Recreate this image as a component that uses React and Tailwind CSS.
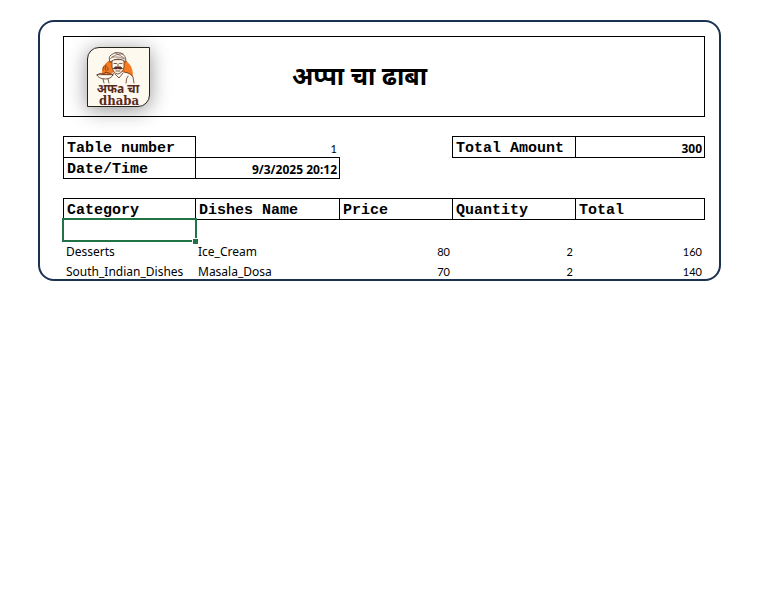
const dishes = [
  { category: "Desserts", name: "Ice_Cream", price: 80, quantity: 2, total: 160 },
  { category: "South_Indian_Dishes", name: "Masala_Dosa", price: 70, quantity: 2, total: 140 },
];

const mono = "font-['Liberation_Mono',monospace] text-[15px] leading-4 font-bold text-left p-0 pt-1 pl-[3px]";
const calc = "font-['Lato',sans-serif] p-0 pr-[3px] text-right";
const strong = "font-['Noto_Sans',sans-serif] p-0 pt-[3px] pr-0.5 text-right text-xs leading-4 font-bold";
const label = "font-['Noto_Sans',sans-serif] text-xs leading-5 p-0";

function Columns() {
  return (
    <colgroup>
      <col className="w-[133px]" />
      <col className="w-[144px]" />
      <col className="w-[113px]" />
      <col className="w-[123px]" />
      <col className="w-[129px]" />
    </colgroup>
  );
}

function Logo() {
  return (
    <div className="h-[60px] w-[63px] overflow-hidden rounded-[12px_0] border border-[#26221c] bg-[#fdf9ee] shadow-[0_3px_20px_rgba(0,0,0,0.42)]">
      <svg viewBox="0 0 61 58" className="block h-full w-full" role="img" aria-label="अफa चा dhaba">
        <path d="M14.500 31Q13 28 14 23A15.5 15.5 0 0 1 44.500 23Q45.500 27 44 30Z" fill="#f47b20" />
        <g stroke="#5b3326" strokeWidth="0.8" strokeLinecap="round" strokeLinejoin="round">
          <path d="M19 35L20 28L26 24H35Q43 25 45 30L46 35Z" fill="#fdf9ee" stroke="none" />
          <path d="M24 12V19Q25 25 29.5 26Q35 25 36 19V12Z" fill="#fdf3e6" />
          <path d="M22 14Q20 9 23 7Q27 3 33 5Q38 7 38 14Q30 8 22 14Z" fill="#fdf9ee" />
          <path d="M22 11Q28 5 35 6M24 9Q31 8 37 11M27 5Q32 7 36 10" fill="none" strokeWidth="0.6" />
          <path d="M26 15.500H28.500M31.500 15.500H34M30 16V18M28 23H32" fill="none" />
          <path d="M25.500 20.500Q27 18 30 19Q33 18 34.500 20.500Q32 21.500 30 20.500Q28 21.500 25.500 20.500Z" fill="#4d2519" />
          <path d="M36 24Q43 25 45 29L46 35M26 25L21 30M38 35Q38 30 40 28M27 26L31 30L35 25" fill="none" />
          <path d="M9 27Q11 31 17 31Q23 31 25 27Z" fill="#fdf9ee" />
          <path d="M9 27Q12 24 15 26Q18 23 21 25L25 27M15 31L16 35M20 31L21 35M15 22Q14 20 16 18M18 23Q16 20 18 17M20 22Q21 20 19 19" fill="none" />
        </g>
        <text x="30" y="45" textAnchor="middle" fill="#5b291b" className="font-['Noto_Sans',sans-serif] text-[12px] font-bold">अफa चा</text>
        <text x="31" y="57" textAnchor="middle" fill="#5b291b" className="font-['DejaVu_Serif_Condensed','DejaVu_Serif',serif] text-[13px] font-bold">dhaba</text>
      </svg>
    </div>
  );
}

export default function App() {
  return (
    <main className="pt-5 pr-[49px] pl-[38px] text-black">
      <section className="overflow-hidden rounded-2xl border-2 border-[#1b3150] bg-white pt-3.5 pr-3.5 pl-[23px]">
        <header className="grid h-[81px] grid-cols-[90px_1fr_162px] items-start border border-black pt-2.5 pl-[23px]">
          <Logo />
          <h1 className="self-start text-center font-['Noto_Sans',sans-serif] text-[25px] leading-[56px] font-bold">अप्पा चा ढाबा</h1>
        </header>

        <table className="mt-[19px] w-full table-fixed border-separate border-spacing-0">
          <Columns />
          <tbody>
            <tr className="h-[22px]">
              <th scope="row" className={`${mono} border border-black`}>Table number</th>
              <td className={`${calc} border-b border-black pt-[5px] text-[11px] leading-4`}>1</td>
              <td className="border-r border-black p-0" />
              <th scope="row" className={`${mono} border-y border-r border-black`}>Total Amount</th>
              <td className={`${strong} border-y border-r border-black`}>300</td>
            </tr>
            <tr className="h-[21px]">
              <th scope="row" className={`${mono} border-x border-b border-black`}>Date/Time</th>
              <td className={`${strong} border-r border-b border-black`}>9/3/2025 20:12</td>
            </tr>
          </tbody>
        </table>

        <table className="mt-[19px] -mb-[3px] w-full table-fixed border-separate border-spacing-0">
          <Columns />
          <thead>
            <tr className="h-[22px]">
              <th scope="col" className={`${mono} border border-black`}>Category</th>
              <th scope="col" className={`${mono} border-y border-r border-black`}>Dishes Name</th>
              <th scope="col" className={`${mono} border-y border-r border-black`}>Price</th>
              <th scope="col" className={`${mono} border-y border-r border-black`}>Quantity</th>
              <th scope="col" className={`${mono} border-y border-r border-black`}>Total</th>
            </tr>
          </thead>
          <tbody className="text-[11px] leading-5">
            <tr className="h-[22px]">
              <td className="relative p-0">
                <span className="absolute -inset-x-px -top-0.5 bottom-0 border-2 border-[#217346]" />
                <span className="absolute -right-0.5 -bottom-0.5 size-1.5 border-t border-l border-white bg-[#217346]" />
              </td>
              <td colSpan={4} className="p-0" />
            </tr>
            {dishes.map((dish) => (
              <tr key={dish.name} className="h-5">
                <td className={`${label} pl-[3px]`}>{dish.category}</td>
                <td className={`${label} pl-0.5`}>{dish.name}</td>
                <td className={calc}>{dish.price}</td>
                <td className={calc}>{dish.quantity}</td>
                <td className={calc}>{dish.total}</td>
              </tr>
            ))}
          </tbody>
        </table>
      </section>
    </main>
  );
}
